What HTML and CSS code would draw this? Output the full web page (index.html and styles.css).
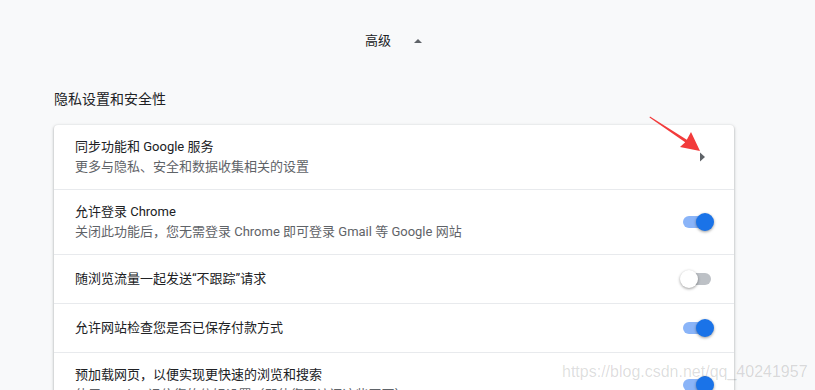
FILE: index.html
```html
<!DOCTYPE html>
<html lang="zh-CN">
<head>
  <meta charset="UTF-8" />
  <title>设置 - 高级</title>
  <meta name="viewport" content="width=device-width, initial-scale=1.0" />
  <link rel="stylesheet" href="styles.css">
</head>
<body>
  <div class="page">
    <div class="advanced">
      <span>高级</span>
      <svg class="drop-up" width="10" height="5" viewBox="0 0 10 5"><path d="M1 5 L5 1 L9 5 Z" fill="#5f6368"/></svg>
    </div>

    <h2 class="section-title">隐私设置和安全性</h2>

    <div class="card">
      <div class="row tall">
        <div class="text">
          <div class="label">同步功能和 Google 服务</div>
          <div class="sub">更多与隐私、安全和数据收集相关的设置</div>
        </div>
        <svg class="subpage" width="10" height="10" viewBox="0 0 10 10"><path d="M3 0.5 L8 5 L3 9.5 Z" fill="#5f6368"/></svg>
      </div>
      <div class="row tall">
        <div class="text">
          <div class="label">允许登录 Chrome</div>
          <div class="sub">关闭此功能后，您无需登录 Chrome 即可登录 Gmail 等 Google 网站</div>
        </div>
        <div class="toggle on"><span class="bar"></span><span class="knob"></span></div>
      </div>
      <div class="row">
        <div class="text">
          <div class="label">随浏览流量一起发送“不跟踪”请求</div>
        </div>
        <div class="toggle"><span class="bar"></span><span class="knob"></span></div>
      </div>
      <div class="row">
        <div class="text">
          <div class="label">允许网站检查您是否已保存付款方式</div>
        </div>
        <div class="toggle on"><span class="bar"></span><span class="knob"></span></div>
      </div>
      <div class="row tall">
        <div class="text">
          <div class="label">预加载网页，以便实现更快速的浏览和搜索</div>
          <div class="sub">使用 Cookie 记住您的偏好设置（即使您不访问这些网页）</div>
        </div>
        <div class="toggle on"><span class="bar"></span><span class="knob"></span></div>
      </div>
    </div>
  </div>

  <!-- annotation drawn over the screenshot -->
  <svg class="red-arrow" width="60" height="45" viewBox="0 0 60 45">
    <path d="M5 4.5 L41.8 27.8 L46 20 L55 39 L35 35 L40.2 30.2 L4.5 5.5 Z" fill="#f23b3b"/>
  </svg>
  <div class="watermark">https://blog.csdn.net/qq_40241957</div>
</body>
</html>
```

FILE: styles.css
```css
body {
  margin: 0;
  background: #f8f9fa;
  color: #202124;
  font-family: Roboto, "Noto Sans CJK SC", sans-serif;
  font-size: 13px;
  line-height: 20px;
  overflow: hidden;
}
.page {
  width: 680px;
  margin-left: 54px;
}
.advanced {
  height: 82px;
  display: flex;
  align-items: center;
  justify-content: center;
  gap: 22px;
  color: #202124;
}
.drop-up {
  margin-top: -2px;
}
.section-title {
  margin: 7px 0 16px;
  font-size: 14px;
  font-weight: 400;
  line-height: 20px;
}
.card {
  background: #fff;
  border-radius: 4px;
  box-shadow: 0 1px 2px rgba(60, 64, 67, 0.3), 0 1px 3px 1px rgba(60, 64, 67, 0.15);
}
.row {
  display: flex;
  align-items: center;
  min-height: 48px;
  padding: 0 20px 0 21px;
  border-top: 1px solid #e8eaed;
}
.row:first-child {
  border-top: none;
}
.row.tall {
  min-height: 64px;
}
.text {
  flex: 1;
}
.sub {
  color: #5f6368;
}
.subpage {
  margin-right: 7px;
}
.toggle {
  position: relative;
  width: 34px;
  height: 16px;
}
.toggle .bar {
  position: absolute;
  left: 3px;
  top: 2px;
  width: 28px;
  height: 12px;
  border-radius: 8px;
  background: #bdc1c6;
}
.toggle .knob {
  position: absolute;
  left: 0;
  top: -1px;
  width: 18px;
  height: 18px;
  border-radius: 50%;
  background: #fff;
  box-shadow: 0 1px 3px rgba(0, 0, 0, 0.4);
}
.toggle.on .bar {
  background: #8ab4f8;
}
.toggle.on .knob {
  left: 16px;
  background: #1a73e8;
}
.red-arrow {
  position: absolute;
  left: 645px;
  top: 112px;
}
.watermark {
  position: absolute;
  left: 562px;
  top: 362px;
  font-family: "Liberation Sans", Arial, sans-serif;
  font-size: 16px;
  color: rgba(0, 0, 0, 0.14);
  white-space: nowrap;
}
```
